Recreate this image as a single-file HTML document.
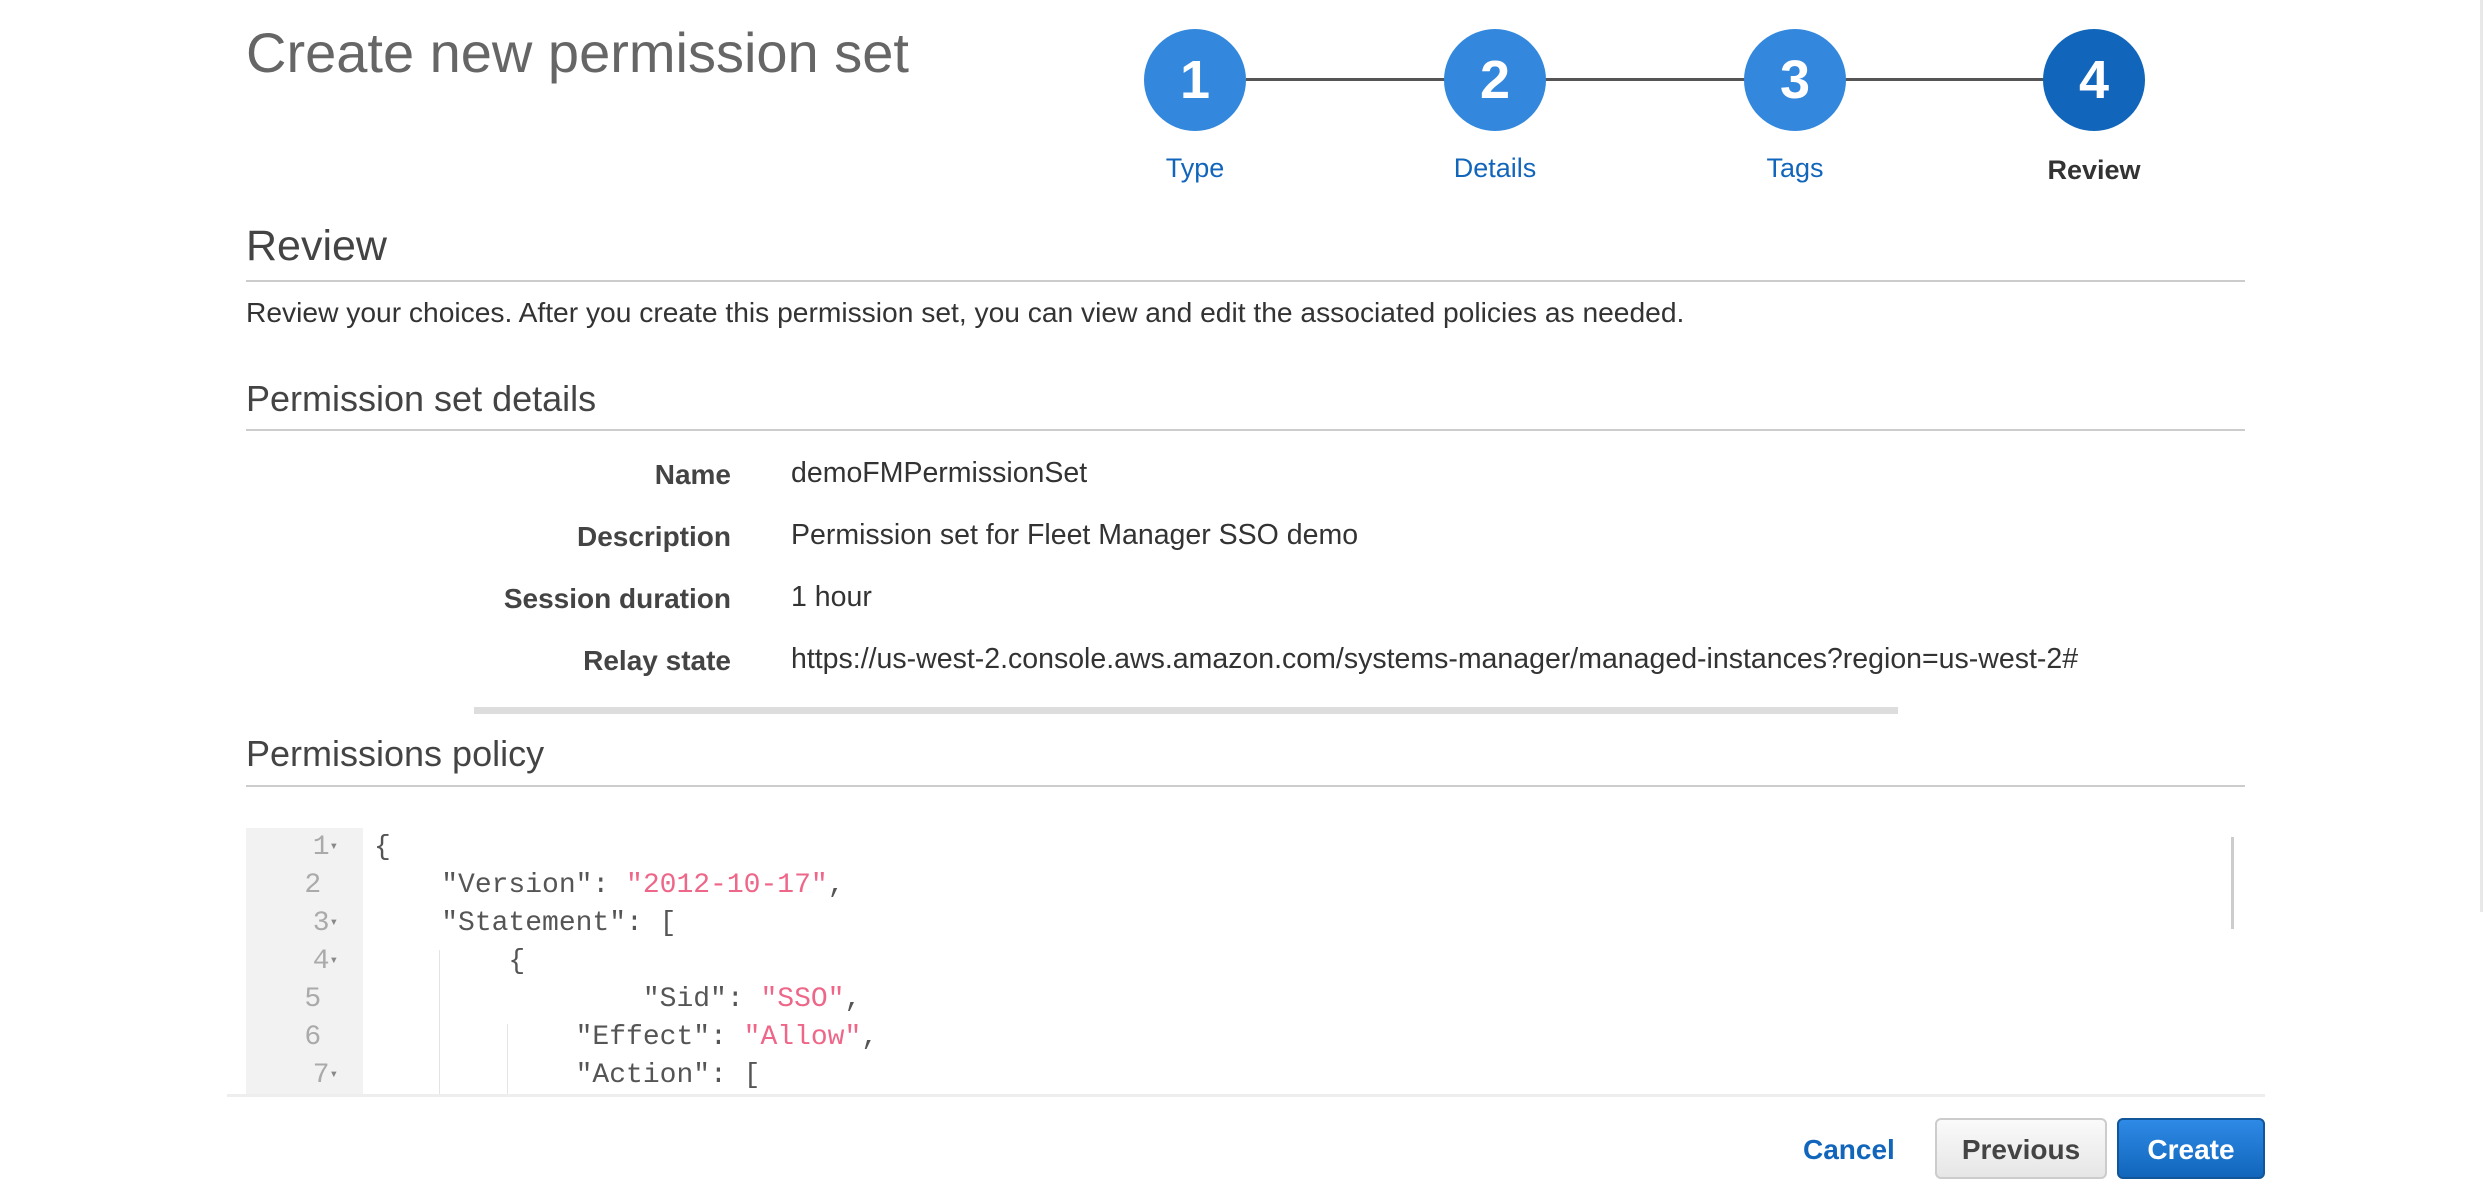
<!DOCTYPE html>
<html><head><meta charset="utf-8"><style>
*{margin:0;padding:0;box-sizing:border-box}
body{width:2486px;height:1198px;background:#fff;position:relative;overflow:hidden;font-family:"Liberation Sans",Arial,sans-serif;color:#333}
.a{position:absolute;white-space:nowrap}
.c{position:absolute;width:102px;height:102px;border-radius:50%;background:#3388dd;color:#fff;font-weight:bold;font-size:54px;text-align:center;line-height:102px;top:29px}
.lbl{position:absolute;top:153px;font-size:27px;color:#1166bb;width:200px;text-align:center}
.hr{position:absolute;height:2px;background:#cccccc;left:246px;width:1999px}
.k{position:absolute;right:1755px;font-weight:bold;font-size:28px;color:#444;text-align:right}
.v{position:absolute;left:791px;font-size:28.5px;color:#333}
.code{position:absolute;font-family:"Liberation Mono",monospace;font-size:28px;color:#555;white-space:pre;left:374px}
.ln{position:absolute;font-family:"Liberation Mono",monospace;font-size:28px;color:#aaa;text-align:right;width:94px;left:244px}
.s{color:#ee6688}
.ar{font-size:14px;color:#888;vertical-align:middle}
</style></head><body>
<div class="a" style="left:246px;top:20px;font-size:56px;color:#666">Create new permission set</div>
<div class="a" style="left:1246px;top:78px;width:800px;height:3px;background:#555"></div>
<div class="c" style="left:1144px">1</div>
<div class="c" style="left:1444px">2</div>
<div class="c" style="left:1744px">3</div>
<div class="c" style="left:2043px;background:#1166bb">4</div>
<div class="lbl" style="left:1095px">Type</div>
<div class="lbl" style="left:1395px">Details</div>
<div class="lbl" style="left:1695px">Tags</div>
<div class="lbl" style="left:1994px;color:#333;font-weight:bold;top:155px">Review</div>

<div class="a" style="left:246px;top:222px;font-size:43px;color:#444">Review</div>
<div class="hr" style="top:280px"></div>
<div class="a" style="left:246px;top:296px;font-size:28.2px;color:#333">Review your choices. After you create this permission set, you can view and edit the associated policies as needed.</div>

<div class="a" style="left:246px;top:378px;font-size:36px;color:#444">Permission set details</div>
<div class="hr" style="top:429px"></div>
<div class="k" style="top:459px">Name</div><div class="v" style="top:457px">demoFMPermissionSet</div>
<div class="k" style="top:521px">Description</div><div class="v" style="top:519px">Permission set for Fleet Manager SSO demo</div>
<div class="k" style="top:583px">Session duration</div><div class="v" style="top:581px">1 hour</div>
<div class="k" style="top:645px">Relay state</div><div class="v" style="top:643px">https://us-west-2.console.aws.amazon.com/systems-manager/managed-instances?region=us-west-2#</div>
<div class="a" style="left:474px;top:707px;width:1424px;height:7px;background:#dddddd"></div>

<div class="a" style="left:246px;top:733px;font-size:36px;color:#444">Permissions policy</div>
<div class="hr" style="top:785px"></div>

<div class="a" style="left:246px;top:828px;width:117px;height:266px;background:#f2f2f2"></div>
<div class="a" style="left:2231px;top:837px;width:3px;height:92px;background:#ccc"></div>
<div class="a" style="left:439px;top:950px;width:1px;height:144px;background:#e4e4e4"></div>
<div class="a" style="left:507px;top:1024px;width:1px;height:70px;background:#e4e4e4"></div>
<div class="ln" style="top:832px">1<span class="ar">▾</span></div>
<div class="ln" style="top:870px">2&nbsp;</div>
<div class="ln" style="top:908px">3<span class="ar">▾</span></div>
<div class="ln" style="top:946px">4<span class="ar">▾</span></div>
<div class="ln" style="top:984px">5&nbsp;</div>
<div class="ln" style="top:1022px">6&nbsp;</div>
<div class="ln" style="top:1060px">7<span class="ar">▾</span></div>
<div class="code" style="top:832px">{</div>
<div class="code" style="top:870px">    "Version": <span class="s">"2012-10-17"</span>,</div>
<div class="code" style="top:908px">    "Statement": [</div>
<div class="code" style="top:946px">        {</div>
<div class="code" style="top:984px">                "Sid": <span class="s">"SSO"</span>,</div>
<div class="code" style="top:1022px">            "Effect": <span class="s">"Allow"</span>,</div>
<div class="code" style="top:1060px">            "Action": [</div>

<div class="a" style="left:0;top:1094px;width:2486px;height:104px;background:#fff"></div>
<div class="a" style="left:227px;top:1094px;width:2038px;height:3px;background:#eeeeee"></div>
<div class="a" style="left:1803px;top:1134px;font-size:28px;font-weight:bold;color:#1166bb">Cancel</div>
<div class="a" style="left:1935px;top:1118px;width:172px;height:61px;border:2px solid #ccc;border-radius:6px;background:linear-gradient(#fafafa,#e6e6e6);font-size:28px;font-weight:bold;color:#444;text-align:center;line-height:59px">Previous</div>
<div class="a" style="left:2117px;top:1118px;width:148px;height:61px;border:2px solid #11559a;border-radius:6px;background:linear-gradient(#2e8ae6,#1166bb);font-size:28px;font-weight:bold;color:#fff;text-align:center;line-height:59px">Create</div>
<div class="a" style="left:2480px;top:0;width:3px;height:912px;background:#e8e8e8"></div>
</body></html>
